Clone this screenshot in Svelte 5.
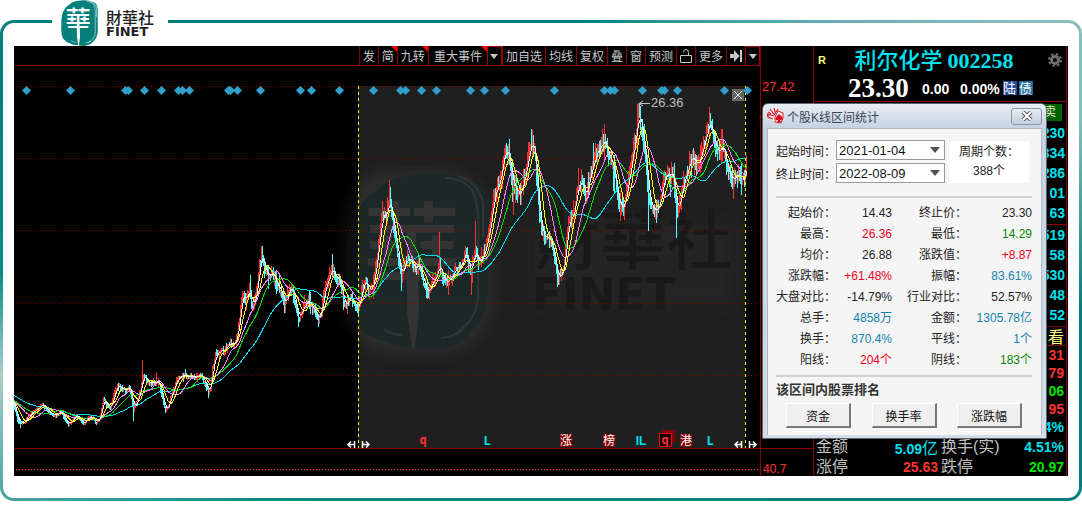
<script>
  const tools = [
    { t: '发' }, { t: '简', hot: true }, { t: '九转', hot: true }, { t: '重大事件', hot: true, wide: true },
    { icon: 'down', label: '更多事件' }, { t: '加自选' }, { t: '均线' }, { t: '复权' }, { t: '叠' }, { t: '窗' },
    { t: '预测' }, { icon: 'lock', label: '锁定' }, { t: '更多' }, { icon: 'end', label: '最新' }, { icon: 'down', label: '展开' }
  ];

  const colon = '\uFF1A';
  const diamonds = [26, 70, 125, 128, 144, 161, 178, 182, 189, 228, 230, 237, 260, 300, 311, 339, 373, 400, 405, 421, 436,
    470, 484, 505, 554, 604, 610, 614, 642, 661, 664, 677, 724, 747];
  const gridLines = [86, 158, 230, 303, 375];

  // Turning points of the closing price, in chart units
  const closes = [
    [-60, 372], [-30, 392], [0, 402], [10, 400], [14, 406], [17, 419], [20, 423], [24, 422], [28, 416], [32, 412], [37, 409], [42, 404], [45, 407], [48, 412],
    [53, 415], [57, 414], [61, 412], [64, 419], [68, 424], [72, 420], [76, 415], [80, 420], [83, 424], [88, 417], [93, 418],
    [96, 423], [99, 418], [101, 410], [103, 398], [106, 404], [110, 408], [113, 396], [117, 385], [121, 388], [126, 391],
    [128, 385], [131, 395], [133, 410], [136, 402], [140, 390], [142, 375], [145, 378], [149, 384], [153, 382], [158, 381], [161, 393],
    [165, 411], [168, 406], [172, 390], [177, 378], [183, 375], [189, 376], [194, 378], [200, 375], [205, 383], [208, 392],
    [210, 388], [212, 368], [215, 354], [219, 353], [224, 350], [229, 343], [235, 343], [238, 325], [241, 300], [243, 290],
    [245, 302], [249, 287], [252, 310], [254, 298], [257, 285], [259, 262], [261, 255], [264, 268], [268, 275], [272, 273], [276, 285],
    [281, 292], [284, 306], [288, 292], [292, 288], [296, 308], [299, 318], [302, 312], [305, 305], [308, 298], [311, 308],
    [315, 310], [318, 320], [321, 310], [324, 290], [327, 280], [331, 268], [334, 275], [338, 278], [341, 290], [345, 306],
    [350, 298], [353, 302], [358, 307], [361, 292], [365, 278], [368, 292], [372, 286], [376, 262], [379, 240], [382, 212], [386, 218],
    [389, 192], [391, 216], [394, 230], [397, 250], [401, 276], [405, 258], [410, 262], [413, 267], [418, 265], [422, 277],
    [426, 292], [430, 287], [435, 278], [439, 266], [444, 282], [450, 280], [456, 268], [462, 262], [465, 248], [470, 275],
    [475, 247], [478, 262], [482, 260], [486, 242], [490, 225], [494, 192], [498, 185], [502, 165], [506, 148], [509, 158],
    [512, 180], [516, 192], [520, 195], [522, 185], [526, 168], [529, 145], [532, 142], [535, 160], [538, 200], [541, 230],
    [545, 238], [550, 238], [553, 248], [555, 265], [557, 278], [560, 275], [563, 268], [566, 240], [569, 218], [573, 213],
    [577, 187], [581, 182], [585, 195], [588, 182], [593, 163], [597, 153], [603, 142], [607, 150], [610, 162], [614, 170],
    [617, 195], [620, 206], [623, 210], [626, 192], [630, 165], [634, 145], [638, 114], [641, 130], [645, 152], [648, 198],
    [651, 205], [656, 214], [660, 200], [664, 177], [670, 174], [673, 175], [676, 210], [680, 200], [684, 178], [688, 165],
    [692, 161], [697, 165], [702, 150], [706, 133], [709, 119], [713, 140], [717, 153], [722, 143], [726, 165], [730, 178],
    [735, 175], [740, 174], [744, 184], [746, 160], [748, 164]
  ];
  const peaks = { 142: 360, 156: 372, 261: 246, 332: 254, 389: 180, 439: 232, 475: 221, 509: 139, 531: 129, 593: 143, 604: 124, 638: 103, 709: 107, 722: 129 };
  const troughs = { 20: 427, 133: 420, 208: 397, 298: 326, 318: 326, 427: 298, 471: 294, 513: 214, 557: 286, 613: 190, 648: 230, 656: 222, 676: 237 };

  let seed = 11;
  function noise() {
    seed = (seed * 16807) % 2147483647;
    return seed / 2147483647;
  }

  const series = [];
  for (let i = 0; i < closes.length - 1; i++) {
    const [x0, y0] = closes[i];
    const [x1, y1] = closes[i + 1];
    for (let x = x0; x < x1; x++) {
      const y = y0 + ((y1 - y0) * (x - x0)) / (x1 - x0);
      const swing = 1 + (430 - y) / 36;
      series.push({ x, c: y + (noise() - 0.5) * swing * 1.4, swing });
    }
  }

  let rise = '';
  let fall = '';
  series.forEach((p, i) => {
    if (p.x < 14 || p.x > 746) return;
    const prev = series[i - 1].c;
    const burst = noise() > 0.78 ? 2.2 : 1.1;
    const high = peaks[p.x] ?? Math.max(104, Math.min(prev, p.c) - noise() * p.swing * burst);
    const low = troughs[p.x] ?? Math.max(prev, p.c) + noise() * p.swing * burst;
    const d = `M${p.x + 0.5} ${Math.round(high)}V${Math.round(low) + 1}`;
    if (p.c < prev) rise += d;
    else fall += d;
  });

  function average(days) {
    let d = '';
    series.forEach((p, i) => {
      if (p.x < 14 || i < days) return;
      let sum = 0;
      for (let k = 0; k < days; k++) sum += series[i - k].c;
      d += `${d ? 'L' : 'M'}${p.x} ${(sum / days).toFixed(1)}`;
    });
    return d;
  }
  const averages = [
    { d: average(60), color: '#00e0f0' }, { d: average(30), color: '#00e000' }, { d: average(20), color: '#ff80ff' },
    { d: average(10), color: '#ffff00' }, { d: average(5), color: '#ffffff' }
  ];

  const stats = [
    ['起始价', '14.43', '', '终止价', '23.30', ''],
    ['最高', '26.36', 'red', '最低', '14.29', 'green'],
    ['均价', '26.88', '', '涨跌值', '+8.87', 'red'],
    ['涨跌幅', '+61.48%', 'red', '振幅', '83.61%', 'blue'],
    ['大盘对比', '-14.79%', '', '行业对比', '52.57%', ''],
    ['总手', '4858万', 'blue', '金额', '1305.78亿', 'blue'],
    ['换手', '870.4%', 'blue', '平线', '1个', 'blue'],
    ['阳线', '204个', 'red', '阴线', '183个', 'green']
  ];
  const asks = ['230', '334', '286', '01', '63'];
  const bids = ['519', '58', '530', '48', '52'];
  const trades = [['31', 'up'], ['79', 'up'], ['06', 'dn'], ['95', 'up'], ['4%', 'cy']];
</script>

{#snippet seal(fill, ink)}
  <path {fill} d="M14 35Q18 26 32 17Q45 5 67 3Q92-2 114 5Q136 8 140 27Q144 45 141 70L142 120Q140 145 127 158Q116 173 94 177Q78 179 65 174Q49 176 38 169Q18 164 7 149Q-2 128 1 99Q-2 57 14 35Z" />
  <g fill="none" stroke={ink} stroke-width="2">
    <path d="M99 6Q124 7 129 25Q134 45 132 70V128Q128 152 106 164" />
    <path d="M112 4Q133 10 137 32V65M38 158Q48 163 56 163M95 166Q108 165 116 158" />
  </g>
  <text x="66" y="112" text-anchor="middle" class="seal-text" fill={ink}>華</text>
  <path fill={ink} d="M61 104L72 104L73 140L69 176L66 176L61 140Z" />
{/snippet}

<div class="page">
  <main class="frame">
    <header class="brand">
      <svg class="seal" viewBox="0 0 142 178" aria-hidden="true">{@render seal('#04807b', '#ffffff')}</svg>
      <div class="brand-name"><span class="zh">財華社</span><span class="en">FINET</span></div>
    </header>

    <div class="screen">
      <section class="chart">
        <nav class="toolbar">
          {#each tools as tool}
            <button class:hot={tool.hot} class:wide={tool.wide} class:icon={tool.icon === 'down'} aria-label={tool.label}>
              {#if tool.t}{tool.t}
              {:else if tool.icon === 'down'}
                <svg width="8" height="5" viewBox="0 0 8 5"><path d="M0 0H8L4 5Z" fill="#c8c8c8" /></svg>
              {:else if tool.icon === 'lock'}
                <svg width="12" height="14" viewBox="0 0 12 14" fill="none" stroke="#c8c8c8"><path d="M.5 6.500H11.500V13.500H.5ZM3.500 3.500Q3.500.5 6 .5T8.500 3.500V6.500" /></svg>
              {:else}
                <svg width="12" height="12" viewBox="0 0 12 12" fill="#c8c8c8"><path d="M0 4H4V0L9.500 6L4 12V8H0ZM10 0H12V12H10Z" /></svg>
              {/if}
            </button>
          {/each}
        </nav>

        <svg class="plot" viewBox="14 66 746 410" role="img" aria-label="K线">
          <defs>
            <filter id="glow" x="-20%" y="-20%" width="140%" height="140%"><feGaussianBlur stdDeviation="8" /></filter>
            <clipPath id="plot-area"><rect x="14" y="66" width="733" height="382" /></clipPath>
          </defs>
          <rect x="358" y="86" width="387" height="362" fill="#1f1f1f" />
          <rect x="344" y="172" width="146" height="180" rx="50" fill="#343434" opacity=".7" filter="url(#glow)" />
          <rect x="530" y="222" width="205" height="84" fill="#2a2a2a" opacity=".5" filter="url(#glow)" />
          <svg x="346" y="172" width="142" height="178" viewBox="0 0 142 178">{@render seal('#1c2828', '#343434')}</svg>
          <rect x="330" y="160" width="28" height="200" fill="#000" opacity=".6" />
          <text class="mark-zh" x="534" y="264">財華社</text>
          <text class="mark-en" x="532" y="310">FINET</text>

          <g stroke="#8c0000" stroke-dasharray="1 2" shape-rendering="crispEdges">
            {#each gridLines as y}<path d="M16 {y + 0.5}H760" />{/each}
            <path d="M16 469.500H760" stroke="#ff4040" />
          </g>
          <path d="M14 448.500H760" stroke="#8c0000" shape-rendering="crispEdges" />

          <g clip-path="url(#plot-area)" fill="none" shape-rendering="crispEdges">
            <path d={rise} stroke="#ff3232" />
            <path d={fall} stroke="#54fcfc" />
            {#each averages as line}<path d={line.d} stroke={line.color} />{/each}
          </g>

          <path d="M358.500 86V448M745.500 86V448" stroke="#ffff00" stroke-dasharray="3 3" shape-rendering="crispEdges" />
          <g fill="#2f9fcb">
            {#each diamonds as x}<path d="M{x - 4} 90.500L{x + 0.5} 86L{x + 5} 90.500L{x + 0.5} 95Z" />{/each}
          </g>
          <rect x="732" y="89" width="12" height="12" fill="#666" />
          <path d="M734 91L742 99M742 91L734 99" stroke="#eee" />
          <path d="M640 103.500H650M643 101L639 103.500L643 106" fill="none" stroke="#c0c0c0" />
          <text class="peak" x="651" y="107">26.36</text>

          <g fill="none" stroke="#fff" stroke-width="1.500">
            {#each [347, 734] as x}
              <path d="M{x + 1} 444.500H{x + 7}M{x + 7.5} 441V448M{x + 4} 441.500L{x + 1} 444.500L{x + 4} 447.500" />
              <path d="M{x + 16} 444.500H{x + 22}M{x + 15.5} 441V448M{x + 19} 441.500L{x + 22} 444.500L{x + 19} 447.500" />
            {/each}
          </g>
          <g fill="#860000">
            <rect x="560" y="434" width="12" height="13" /><rect x="603" y="434" width="12" height="13" />
            <rect x="680" y="434" width="12" height="13" /><rect x="662" y="430" width="13" height="13" />
          </g>
          <rect x="659.500" y="433.500" width="12" height="13" fill="#100000" stroke="#f00" />
          <g class="flags" text-anchor="middle">
            <text x="423" y="444" fill="#ff3232">q</text><text x="487" y="445" fill="#00e0f0">L</text>
            <text class="zh-flag" x="566" y="445">涨</text><text class="zh-flag" x="609" y="445">榜</text>
            <text class="pair-flag" x="641" y="445" fill="#00e0f0">IL</text>
            <text x="665" y="444" fill="#ff3232">q</text>
            <text class="zh-flag" x="686" y="445">港</text><text x="710" y="445" fill="#00e0f0">L</text>
          </g>
        </svg>
      </section>

      <aside class="axis">
        <div class="axis-main"><span>27.42</span></div>
        <div class="axis-sub"><span>40.7</span></div>
      </aside>

      <section class="quote">
        <div class="head">
          <div class="name">
            <b class="r">R</b>
            <h1>利尔化学 <span>002258</span></h1>
            <svg width="14" height="14" viewBox="0 0 14 14" aria-hidden="true">
              <circle cx="7" cy="7" r="3.500" fill="none" stroke="#707070" stroke-width="3" />
              <circle cx="7" cy="7" r="6" fill="none" stroke="#707070" stroke-width="2" stroke-dasharray="2.400 2.300" />
            </svg>
          </div>
          <div class="price">
            <strong>23.30</strong><b>0.00</b><b class="pct">0.00%</b><i>陆</i><i class="debt">债</i>
          </div>
        </div>
        <div class="sell"><button>卖</button></div>
        <div class="levels">{#each asks as v}<div>{v}</div>{/each}</div>
        <div class="levels">{#each bids as v}<div>{v}</div>{/each}</div>
        <div class="look">看</div>
        <div class="trades">{#each trades as [v, tone]}<div class={tone}>{v}</div>{/each}</div>
        <div class="pairs">
          <span>金额</span><b class="cy">5.09<em>亿</em></b><span>换手(实)</span><b class="cy">4.51%</b>
          <span>涨停</span><b class="up">25.63</b><span>跌停</span><b class="dn">20.97</b>
        </div>
      </section>

      <section class="dialog" aria-labelledby="dialog-title">
        <div class="titlebar">
          <svg width="17" height="16" viewBox="0 0 17 16" aria-hidden="true">
            <path d="M1 5L5 1L8 0L12 1L16 7L13 14L9 15L3 10Z" fill="#fff" />
            <path d="M1 9L0 6L3 7M1 4L4 6M3 1L6 5M7 0L8 4M11 1L9 4M1 9L6 11M3 7L7 8M6 5L8 7M8 4L9 6M4 6L3 7" fill="none" stroke="#d8101c" stroke-width="1.200" />
            <path d="M8 9L11 3L16 5Q17 10 14 15L8 14Z" fill="#fff" stroke="#d8101c" />
            <path d="M12 6Q16 9 15.500 11Q14 13 12.500 11.500L14 14H10L11.500 11.500Q9 13 8.500 11Q8.500 9 12 6Z" fill="#e00018" />
          </svg>
          <h2 id="dialog-title">个股K线区间统计</h2>
          <button class="close" aria-label="关闭">
            <svg width="12" height="10" viewBox="0 0 12 10"><path d="M2 1L10 9M10 1L2 9" stroke="#555" stroke-width="4" /><path d="M2 1L10 9M10 1L2 9" stroke="#fff" stroke-width="2" /></svg>
          </button>
        </div>
        <div class="body">
          <div class="period">
            <div class="dates">
              <label for="from">起始时间{colon}</label>
              <div class="pick"><select id="from"><option>2021-01-04</option></select></div>
              <label for="to">终止时间{colon}</label>
              <div class="pick"><select id="to"><option>2022-08-09</option></select></div>
            </div>
            <div class="count"><span>周期个数{colon}</span><span>388个</span></div>
          </div>
          <table>
            <colgroup><col class="c1" /><col class="c2" /><col class="c3" /><col /></colgroup>
            <tbody>
              {#each stats as [a, b, tb, c, d, td]}
                <tr><th>{a}{colon}</th><td class={tb}>{b}</td><th>{c}{colon}</th><td class={td}>{d}</td></tr>
              {/each}
            </tbody>
          </table>
          <h3>该区间内股票排名</h3>
          <div class="ranks"><button>资金</button><button>换手率</button><button>涨跌幅</button></div>
        </div>
      </section>
    </div>
  </main>
</div>

<style>
  :global(body) { margin: 0; background: #fff; }
  * { box-sizing: border-box; }
  button, select { font: inherit; margin: 0; cursor: pointer; }
  h1, h2, h3 { margin: 0; }
  .page { padding-top: 20px; font: 12px "Liberation Sans", "Noto Sans CJK SC", sans-serif; }
  .frame {
    border: 3px solid transparent; border-radius: 14px; padding: 0 11px 22px;
    background: linear-gradient(#fff, #fff) padding-box,
      conic-gradient(#04807b 0deg, #04807b 10deg, #85bfbc 64deg, #85bfbc 75deg, #04807b 95deg, #04807b 115deg, #048a85 230deg,
        #48a3a1 246deg, #a8cfcd 258deg, #048a85 269deg, #04807b 290deg, #04807b 360deg) border-box;
  }
  .brand { display: flex; align-items: center; gap: 8px; width: 116px; height: 46px; margin: -23px 0 0 38px; padding-left: 9px; background: #fff; }
  .seal { width: 37px; height: 46px; overflow: visible; }
  .seal-text { font: 500 98px "Noto Sans CJK TC", sans-serif; }
  .brand-name { display: flex; flex-direction: column; color: #222; }
  .zh { font: 500 16px/16px "Noto Sans CJK TC", sans-serif; }
  .en { font: bold 13px/13px "DejaVu Sans", sans-serif; }

  .screen { position: relative; display: grid; grid-template-columns: minmax(0, 1fr) 53px 255px; background: #000; }

  .toolbar { display: flex; justify-content: flex-end; height: 20px; border-bottom: 1px solid #8c0000; }
  .toolbar button { position: relative; display: flex; align-items: center; justify-content: center; padding: 0 3px; border: 0; border-left: 1px solid #8c0000; background: #000; color: #c8c8c8; white-space: nowrap; }
  .toolbar .wide { padding: 0 5px; }
  .toolbar .icon { width: 15px; padding: 0 2px; border: 1px solid #b00000; border-bottom: 0; }
  .toolbar .hot::after { content: ""; position: absolute; top: 0; right: 0; border: 3px solid #f00; border-left-color: transparent; border-bottom-color: transparent; }
  .plot { display: block; width: 100%; }
  .mark-zh { font: 500 66px "Noto Sans CJK TC", sans-serif; fill: #191919; }
  .mark-en { font: bold 44px "DejaVu Sans", sans-serif; fill: #191919; }
  .peak { font: 13px "Liberation Sans", sans-serif; fill: #c0c0c0; }
  .flags { font: bold 12px "DejaVu Sans Mono", monospace; }
  .pair-flag { font-family: "Liberation Sans", sans-serif; }
  .zh-flag { font: 12px "Noto Sans CJK SC", sans-serif; fill: #fff; }

  .axis { display: flex; flex-direction: column; border-left: 1px solid #8c0000; color: #ff3232; }
  .axis-main { flex: 1; padding: 33px 1px 0; border-bottom: 1px solid #8c0000; font-size: 13px; line-height: 15px; }
  .axis-sub { height: 27px; padding: 13px 2px 0; line-height: 14px; }

  .quote { border: solid #8c0000; border-width: 0 1px; margin-right: 1px; color: #00e0f0; }
  .head { height: 56px; border-bottom: 1px solid #8c0000; }
  .name { display: flex; align-items: center; justify-content: space-between; height: 27px; padding: 0 4px; }
  .r { color: #ffff80; font-size: 11px; }
  h1 { padding-right: 6px; font: 500 22px/26px "Noto Sans CJK SC", sans-serif; }
  h1 span { font: bold 22px/26px "Liberation Serif", serif; }
  .price { display: flex; align-items: center; height: 28px; padding: 2px 0 0 34px; color: #fff; font-size: 14px; }
  .price strong { width: 74px; font: bold 27px/27px "Liberation Serif", serif; }
  .price b { width: 38px; padding-top: 2px; font-size: 14px; }
  .price .pct { width: 43px; }
  .price i { width: 14px; margin-right: 2px; background: #2a4fa0; font: 13px/14px "Noto Sans CJK SC", sans-serif; }
  .price .debt { background: #246a9e; }
  .sell { display: flex; justify-content: flex-end; height: 21px; padding: 2px 4px 2px 0; }
  .sell button { width: 28px; padding: 0 6px 0 0; border: 0; background: #006400; color: #e8e8c0; text-align: right; line-height: 17px; }
  .levels { padding: 0 1px 1px 0; border-bottom: 1px solid #8c0000; text-align: right; font: bold 14px/20px "Liberation Sans", sans-serif; }
  .look { height: 19px; padding-right: 2px; border-bottom: 1px solid #8c0000; color: #ffff80; text-align: right; font: 16px/18px "Noto Sans CJK SC", sans-serif; }
  .trades { padding-right: 2px; text-align: right; font: bold 14px/18px "Liberation Sans", sans-serif; }
  .pairs { display: grid; grid-template-columns: 32px 87px 60px 1fr; column-gap: 3px; padding: 2px 2px 0; color: #c0c0c0; font: 16px/18px "Liberation Sans", "Noto Sans CJK SC", sans-serif; }
  .pairs span { white-space: nowrap; }
  .pairs b { text-align: right; font-size: 14px; }
  .pairs em { font: 16px/18px "Noto Sans CJK SC", sans-serif; }
  .up { color: #ff3232; }
  .dn { color: #00e600; }
  .cy { color: #00e0f0; }

  .dialog { position: absolute; top: 57px; right: 21px; width: 285px; padding: 0 4px 3px; border: 1px solid #5c6670; border-radius: 6px 6px 0 0; background: linear-gradient(#e8eef5, #c4d2e1 24px, #d2dde9); color: #222; }
  .titlebar { display: flex; align-items: center; gap: 3px; height: 24px; }
  h2 { flex: 1; font-size: 12px; font-weight: normal; color: #3a4450; }
  .close { display: grid; place-items: center; width: 31px; height: 17px; padding: 0; border: 1px solid #8796a8; border-radius: 3px; background: linear-gradient(#e4ebf3, #c3d0de); }
  .body { padding: 11px 9px 7px 8px; border: solid #b4b8bc; border-width: 1px 1px 0; background: #f5f5f5; }
  .period { display: flex; justify-content: space-between; align-items: center; padding: 0 3px 13px 0; border-bottom: 2px solid #d2d2d2; }
  .dates { display: grid; grid-template-columns: 60px 109px; row-gap: 3px; align-items: center; }
  .dates label { white-space: nowrap; }
  .pick { position: relative; }
  .pick::after { content: ""; position: absolute; top: 7px; right: 5px; border: 5px solid transparent; border-top: 6px solid #505050; border-bottom: 0; pointer-events: none; }
  select { display: block; width: 100%; height: 20px; padding: 0 2px; border: 1px solid #999; border-radius: 0; background: #fff; color: #111; font-size: 13px; appearance: none; }
  .count { display: flex; flex-direction: column; align-items: center; width: 80px; padding: 2px 0; background: #fff; line-height: 19px; }
  .count span { white-space: nowrap; }
  table { width: 100%; margin: 5px 0 4px; border-collapse: collapse; table-layout: fixed; }
  th, td { height: 21px; padding: 0; text-align: right; font-weight: normal; line-height: 21px; white-space: nowrap; }
  .c1 { width: 60px; }
  .c2 { width: 56px; }
  .c3 { width: 75px; }
  .red { color: #f0001c; }
  .green { color: #0a840a; }
  .blue { color: #1482ac; }
  h3 { padding-top: 4px; border-top: 2px solid #d2d2d2; font-size: 13px; line-height: 18px; color: #333; }
  .ranks { display: flex; justify-content: space-between; padding: 4px 10px 0; }
  .ranks button { width: 65px; height: 25px; padding: 0; border: solid; border-width: 1px 2px 2px 1px; border-color: #fff #777 #777 #fff; background: #efefef; color: #111; }
</style>
